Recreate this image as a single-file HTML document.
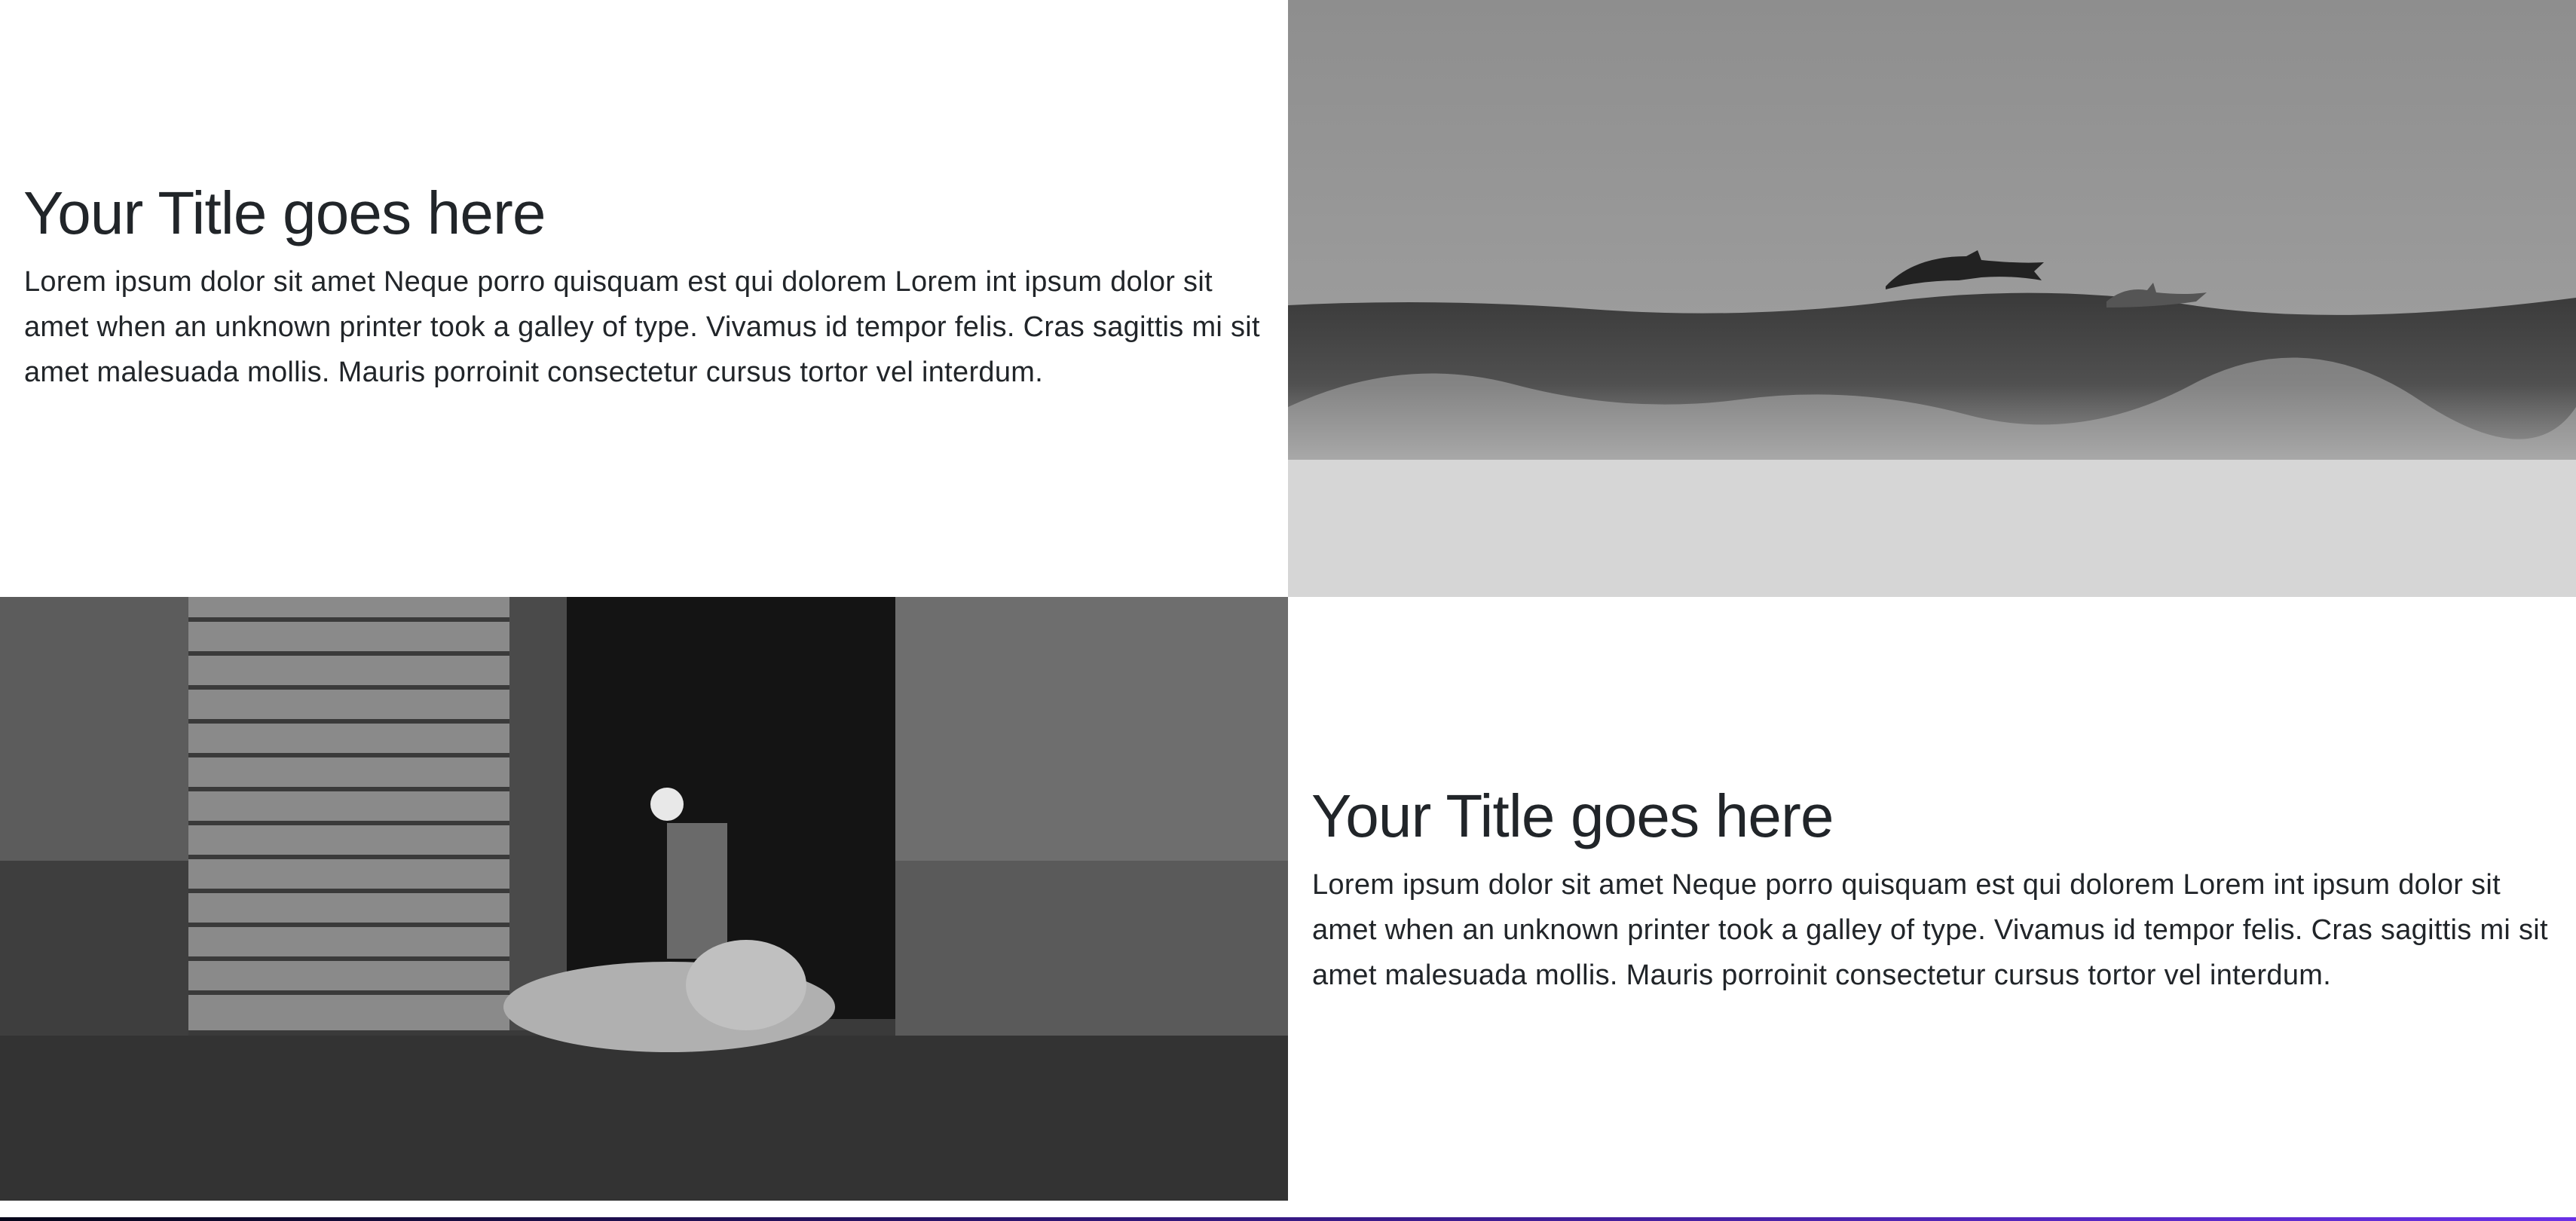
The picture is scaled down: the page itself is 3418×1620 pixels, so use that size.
<!DOCTYPE html>
<html><head><meta charset="utf-8"><style>
html,body{margin:0;padding:0;background:#fff;width:3418px;height:1620px;overflow:hidden;position:relative}
.t{position:absolute;font-family:"Liberation Sans",sans-serif;color:#212529}
.h{font-size:80px;letter-spacing:-0.8px;white-space:nowrap;line-height:1}
.p{font-size:38px;line-height:60px;white-space:nowrap;letter-spacing:0.3px}
svg{position:absolute;display:block}
</style></head><body>
<div class="t h" style="left:31px;top:243px">Your Title goes here</div>
<div class="t p" style="left:32px;top:344px">Lorem ipsum dolor sit amet Neque porro quisquam est qui dolorem Lorem int ipsum dolor sit<br>amet when an unknown printer took a galley of type. Vivamus id tempor felis. Cras sagittis mi sit<br>amet malesuada mollis. Mauris porroinit consectetur cursus tortor vel interdum.</div>

<div class="t h" style="left:1740px;top:1043px">Your Title goes here</div>
<div class="t p" style="left:1741px;top:1144px">Lorem ipsum dolor sit amet Neque porro quisquam est qui dolorem Lorem int ipsum dolor sit<br>amet when an unknown printer took a galley of type. Vivamus id tempor felis. Cras sagittis mi sit<br>amet malesuada mollis. Mauris porroinit consectetur cursus tortor vel interdum.</div>

<svg style="left:1709px;top:0" width="1709" height="792" viewBox="0 0 1709 792">
<defs><linearGradient id="sky" x1="0" y1="0" x2="0" y2="1"><stop offset="0" stop-color="#8e8e8e"/><stop offset="1" stop-color="#a8a8a8"/></linearGradient>
<linearGradient id="sea" x1="0" y1="0" x2="0" y2="1"><stop offset="0" stop-color="#3a3a3a"/><stop offset=".3" stop-color="#505050"/><stop offset=".5" stop-color="#8a8a8a"/><stop offset=".7" stop-color="#c8c8c8"/><stop offset="1" stop-color="#dcdcdc"/></linearGradient></defs>
<rect width="1709" height="792" fill="url(#sky)"/>
<path d="M0 405 Q200 395 400 410 T800 400 T1200 405 T1709 395 L1709 792 L0 792Z" fill="url(#sea)"/>
<path d="M0 540 Q150 470 300 510 T600 530 T900 550 T1200 510 T1500 530 T1709 540 L1709 610 L0 610Z" fill="#b8b8b8" opacity=".5"/>
<rect y="610" width="1709" height="182" fill="#d6d6d6"/>
<path d="M793 380 Q830 340 900 340 L915 332 L920 345 Q970 350 1003 348 L990 360 L1000 372 Q960 365 920 368 L890 372 Q840 372 793 384Z" fill="#222"/>
<path d="M1086 400 Q1110 380 1140 385 L1148 375 L1152 388 Q1190 392 1219 388 L1205 400 Q1150 408 1086 408Z" fill="#555"/>
</svg>

<svg style="left:0;top:792px" width="1709" height="801" viewBox="0 0 1709 801">
<rect width="1709" height="801" fill="#3a3a3a"/>
<rect x="0" y="0" width="250" height="590" fill="#5c5c5c"/>
<rect x="0" y="350" width="250" height="240" fill="#3e3e3e"/>
<rect x="250" y="0" width="426" height="575" fill="#8a8a8a"/>
<g stroke="#3a3a3a" stroke-width="6">
<line x1="250" y1="30" x2="676" y2="30"/><line x1="250" y1="75" x2="676" y2="75"/><line x1="250" y1="120" x2="676" y2="120"/><line x1="250" y1="165" x2="676" y2="165"/><line x1="250" y1="210" x2="676" y2="210"/><line x1="250" y1="255" x2="676" y2="255"/><line x1="250" y1="300" x2="676" y2="300"/><line x1="250" y1="345" x2="676" y2="345"/><line x1="250" y1="390" x2="676" y2="390"/><line x1="250" y1="435" x2="676" y2="435"/><line x1="250" y1="480" x2="676" y2="480"/><line x1="250" y1="525" x2="676" y2="525"/></g>
<rect x="676" y="0" width="76" height="575" fill="#4a4a4a"/>
<rect x="752" y="0" width="436" height="560" fill="#141414"/>
<rect x="885" y="300" width="80" height="180" fill="#6a6a6a"/>
<circle cx="885" cy="275" r="22" fill="#e8e8e8"/>
<rect x="1188" y="0" width="521" height="600" fill="#6e6e6e"/>
<rect x="1188" y="350" width="521" height="250" fill="#5a5a5a"/>
<rect x="0" y="582" width="1709" height="219" fill="#333"/>
<ellipse cx="888" cy="544" rx="220" ry="60" fill="#b0b0b0"/>
<ellipse cx="990" cy="515" rx="80" ry="60" fill="#c0c0c0"/>
</svg>

<div style="position:absolute;left:0;top:1615px;width:3418px;height:5px;background:linear-gradient(90deg,#06061a,#2c1470 40%,#6a30e6)"></div>
</body></html>
